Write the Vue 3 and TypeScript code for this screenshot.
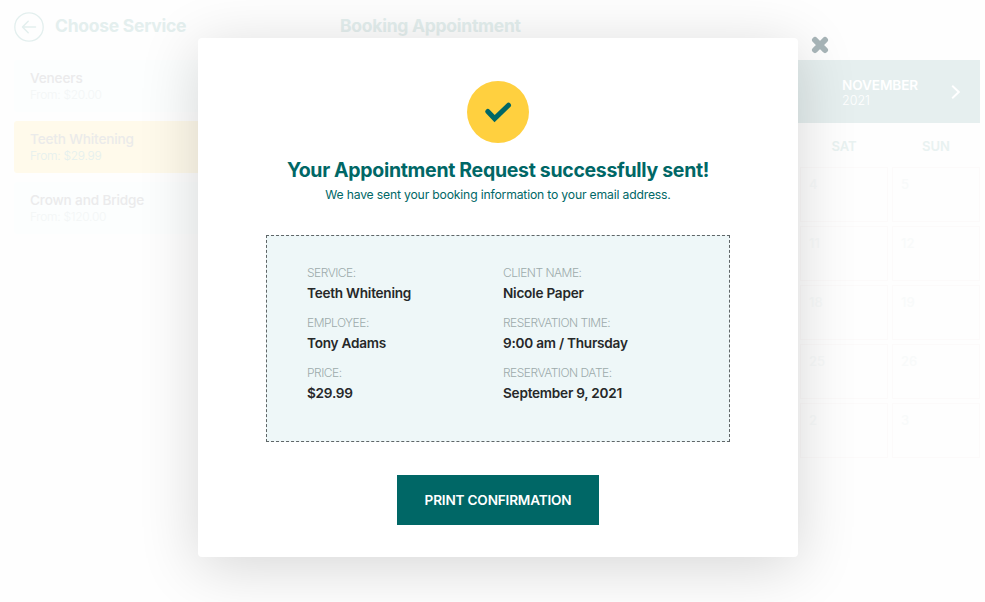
<script setup lang="ts">
interface Service { name: string; price: string; active?: boolean }
interface Detail { label: string; value: string }

const services: Service[] = [
  { name: 'Veneers', price: 'From: $20.00' },
  { name: 'Teeth Whitening', price: 'From: $29.99', active: true },
  { name: 'Crown and Bridge', price: 'From: $120.00' },
]
const weekend: string[] = ['SAT', 'SUN']
const days: number[] = [4, 5, 11, 12, 18, 19, 25, 26, 2, 3]
const details: Detail[] = [
  { label: 'SERVICE:', value: 'Teeth Whitening' },
  { label: 'CLIENT NAME:', value: 'Nicole Paper' },
  { label: 'EMPLOYEE:', value: 'Tony Adams' },
  { label: 'RESERVATION TIME:', value: '9:00 am / Thursday' },
  { label: 'PRICE:', value: '$29.99' },
  { label: 'RESERVATION DATE:', value: 'September 9, 2021' },
]
</script>

<template>
  <div class="screen">
    <main class="page">
      <section class="services">
        <header class="heading">
          <svg class="back" viewBox="0 0 30 30" fill="none" stroke="#e3efee" stroke-linecap="round" stroke-linejoin="round">
            <circle cx="15" cy="15" r="14.2" stroke-width="1.3" />
            <path d="M21.5 15H8.7M14.2 9.2 8.5 15l5.7 5.8" stroke-width="1.5" />
          </svg>
          <h2>Choose Service</h2>
        </header>
        <div class="cards">
          <article v-for="s in services" :key="s.name" class="card" :class="{ active: s.active }">
            <h3>{{ s.name }}</h3>
            <p>{{ s.price }}</p>
          </article>
        </div>
      </section>
      <section class="booking">
        <header class="heading"><h2>Booking Appointment</h2></header>
        <div class="month">
          <div class="month-name"><strong>NOVEMBER</strong><span>2021</span></div>
          <svg class="next" viewBox="0 0 10 16" fill="none" stroke="#fff" stroke-width="2">
            <path d="M1.2 1.8 7.8 8l-6.6 6.2" />
          </svg>
        </div>
        <div class="weekdays"><span v-for="d in weekend" :key="d">{{ d }}</span></div>
        <div class="days"><div v-for="d in days" :key="d" class="day">{{ d }}</div></div>
      </section>
    </main>

    <div class="overlay">
      <div class="modal" role="dialog">
        <div class="badge">
          <svg viewBox="0 0 62 62" fill="none" stroke="#006766" stroke-width="5" stroke-linecap="round">
            <path d="M20.8 30.5 27.6 37.6 41.5 24.2" stroke-linejoin="miter" />
          </svg>
        </div>
        <h1>Your Appointment Request successfully sent!</h1>
        <p class="sub">We have sent your booking information to your email address.</p>
        <dl class="ticket">
          <div v-for="d in details" :key="d.label">
            <dt>{{ d.label }}</dt>
            <dd>{{ d.value }}</dd>
          </div>
        </dl>
        <button type="button" class="print">PRINT CONFIRMATION</button>
      </div>
      <svg class="close" viewBox="0 0 18 18" fill="none" stroke="#a5b2b5" stroke-width="6" stroke-linecap="round">
        <path d="M4 4l10 10M14 4 4 14" />
      </svg>
    </div>
  </div>
</template>

<style>
body { margin: 0; overflow: hidden; background: #fff; }
</style>

<style scoped>
* { box-sizing: border-box; }
h1, h2, h3, p, dl, dt, dd { margin: 0; }
.screen { position: relative; width: 985px; height: 602px; overflow: hidden; background: #fefefe; font-family: Inter, "Liberation Sans", sans-serif; }
.page { display: grid; grid-template-columns: 326px 640px; padding-left: 14px; }
.heading { display: flex; align-items: center; gap: 11px; height: 60px; padding-bottom: 7px; }
.heading h2 { padding-bottom: 1px; font-size: 17.5px; font-weight: 700; line-height: 24px; color: #e4efee; letter-spacing: -0.26px; }
.back { width: 30px; height: 30px; }
.cards { display: grid; gap: 9px; }
.card { height: 52px; padding: 9px 16px 0; border-radius: 3px; background: #fcfefe; color: #ebebec; }
.card h3 { font-size: 13.6px; font-weight: 500; line-height: 18px; letter-spacing: -0.15px; }
.card p { font-size: 12px; line-height: 16px; color: #f3f6f6; font-weight: 300; letter-spacing: -0.28px; }
.card.active { background: #fffaeb; }
.card.active h3 { color: #ebebea; }
.card.active p { color: #e5f0ee; }
.month { display: flex; justify-content: flex-end; align-items: center; gap: 33px; height: 63px; padding-right: 19px; background: #e6efef; color: #fff; }
.month-name { display: grid; padding-top: 1px; }
.month-name strong { font-size: 13.6px; font-weight: 600; line-height: 16px; letter-spacing: -0.12px; }
.month-name span { font-size: 12.5px; line-height: 15px; font-weight: 300; }
.next { width: 10px; height: 16px; margin-top: 1px; }
.weekdays { display: grid; grid-template-columns: 88px 88px; gap: 4px; justify-content: end; height: 44px; align-items: center; text-align: center; font-size: 13px; font-weight: 600; color: #e9f2f1; padding-top: 2px; }
.days { display: grid; grid-template-columns: 88px 88px; gap: 4px; justify-content: end; }
.day { height: 55px; padding: 8px; border: 1px solid #fcfafa; font-size: 13px; font-weight: 500; line-height: 16px; color: #f8fafa; }
.overlay { position: absolute; inset: 0; display: flex; align-items: flex-start; gap: 13px; padding: 38px 0 0 198px; }
.modal { display: flex; flex-direction: column; align-items: center; width: 600px; height: 519px; padding-top: 43px; border-radius: 4px; background: #fff; box-shadow: 0 10px 60px rgba(0, 0, 0, 0.16); }
.badge { width: 62px; height: 62px; border-radius: 50%; background: #ffd03f; }
.badge svg { display: block; }
h1 { margin-top: 13px; font-size: 19.5px; line-height: 28px; font-weight: 700; letter-spacing: -0.31px; color: #006766; white-space: nowrap; }
.sub { margin-top: 2px; font-size: 12.2px; line-height: 18px; letter-spacing: -0.18px; color: #006766; }
.ticket { display: grid; grid-template-columns: 196px 1fr; grid-auto-rows: 50px; width: 464px; height: 207px; margin-top: 31px; padding: 28px 20px 0 40px; border: 1px dashed #5f6668; background: #eef7f8; }
dt { font-size: 12px; font-weight: 300; line-height: 18px; letter-spacing: -0.5px; color: #9dabab; }
dd { font-size: 13.6px; font-weight: 600; line-height: 22px; letter-spacing: -0.24px; color: #262829; }
.print { width: 202px; height: 50px; margin-top: 33px; padding: 0; border: 0; background: #006766; color: #fff; font: 600 13.6px/50px Inter, "Liberation Sans", sans-serif; letter-spacing: -0.19px; }
.close { width: 18px; height: 18px; margin-top: -2px; }
</style>
